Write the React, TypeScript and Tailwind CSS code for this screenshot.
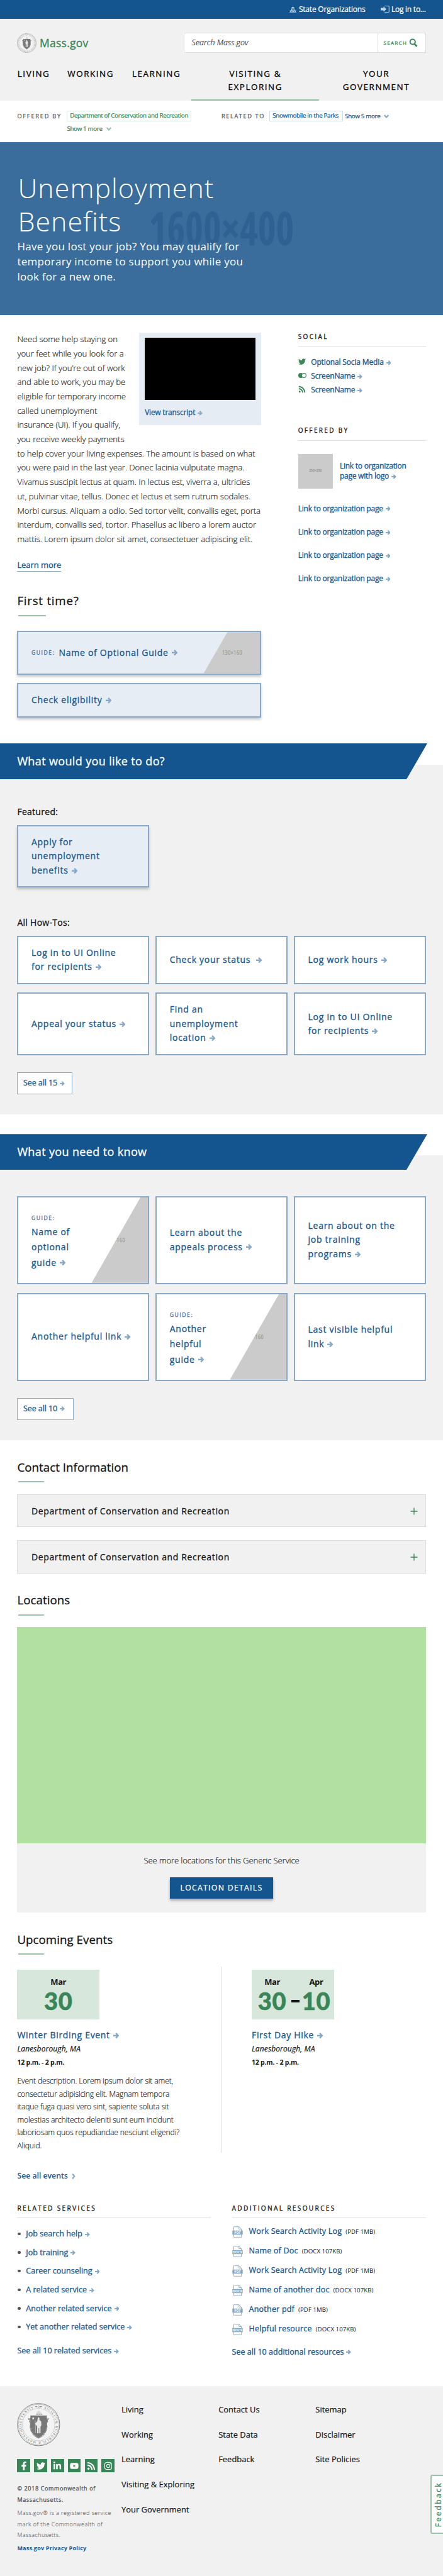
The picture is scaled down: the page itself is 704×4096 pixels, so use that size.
import React from "react";
import { FaFacebookF, FaTwitter, FaLinkedinIn, FaYoutube, FaRss, FaInstagram } from "react-icons/fa";

// Stroke weights that sit between the installed Open Sans cuts
const medium = "font-normal [-webkit-text-stroke:0.3px]";
const book = "font-light [-webkit-text-stroke:0.14px]";
const small = "ml-[4px] size-[7.8px]";

function Arrow({ className = "ml-[5px] size-[9.5px]" }: { className?: string }) {
  return (
    <svg viewBox="0 0 20 20" className={`inline-block align-[-0.3px] ${className}`} fill="none" stroke="#86a8c7" strokeWidth="5">
      <path d="M0 10H16" />
      <path d="M8.5 2l8.2 8-8.2 8" />
    </svg>
  );
}

function Chevron({ color }: { color: string }) {
  return (
    <svg viewBox="0 0 16 12" className="ml-[6px] inline-block h-[6px] w-[8px]" fill="none" stroke={color} strokeWidth="4.5">
      <path d="M1.5 2l6.5 7 6.5-7" />
    </svg>
  );
}

function Seal({ className, id }: { className: string; id: string }) {
  return (
    <svg viewBox="0 0 100 100" className={className} fill="none">
      <circle cx="50" cy="50" r="49" fill="#f4f4f4" stroke="#757575" strokeWidth="1.3" />
      <circle cx="50" cy="50" r="46.8" stroke="#9a9a9a" strokeWidth="0.8" />
      <circle cx="50" cy="50" r="37.4" stroke="#8a8a8a" strokeWidth="1" strokeDasharray="1 0.8" />
      <path id={id} d="M50 10.5a39.5 39.5 0 0 1 0 79a39.5 39.5 0 0 1 0-79" />
      <text fontSize="7.6" fill="#6f6f6f" fontFamily="Liberation Serif, serif">
        <textPath href={`#${id}`} startOffset="13" textLength="222">SIGILLUM REIPUBLICÆ MASSACHUSETTENSIS</textPath>
      </text>
      <path d="M41 8.5l5-1.5v3zM59 8.5l-5-1.5v3z" fill="#777" />
      <circle cx="50" cy="8.5" r="1.8" stroke="#777" />
      <path d="M43 27l6-10 4 2 7 8z" fill="#d9d9d9" />
      <path d="M45 26.5h3M50 26.5h3M55 26.5h3" stroke="#888" strokeWidth="1.4" />
      <path d="M26 37h5l-1.5 5 2.5 6-1 8c2 12 8 20 19 24.5c11-4.5 17-12.5 19-24.5l-1-8 2.5-6L69 37h5" stroke="#777" strokeWidth="3" strokeDasharray="2.4 0.7" />
      <path d="M31 28.7h38v22c0 13-8 24-19 29.3c-11-5.3-19-16.3-19-29.3z" fill="#777" />
      <path d="M37.5 32l.9 2.2 2.4.1-1.900 1.500.7 2.300-2.100-1.300-2 1.300.7-2.300-1.900-1.500 2.400-.1z" fill="#fff" />
      <path d="M42 40c1 10 1 20 .5 30" stroke="#ddd" strokeWidth="0.9" />
      <path d="M48 35.500c0-3 4-3 4 0v4l4 3 .5 9-2 3v15.500h-3V58l-1.500 0v12h-3.500V54l-1.500-2-3-4 5-6z" fill="#e9e9e9" />
    </svg>
  );
}

function Card({ children, featured, className = "" }: { children: React.ReactNode; featured?: boolean; className?: string }) {
  return (
    <div className={`relative flex flex-col justify-center border-2 border-[#88a9c8] px-[20.6px] text-[14px] leading-[22.6px] tracking-[0.052em] whitespace-nowrap text-[#14558f] ${medium} ${featured ? "bg-[#e7edf5] shadow-[0_3px_4px_rgba(0,0,0,0.22)]" : "bg-white"} ${className}`}>
      {children}
    </div>
  );
}

function Thumb({ className }: { className: string }) {
  return (
    <div className={`absolute inset-y-0 right-0 flex w-[89.5px] items-center bg-[#cbcbcb] text-[9px] leading-none tracking-[0.08em] text-[#9c9c9c] ${className}`}>
      <span className="origin-left scale-x-[0.78]">130×160</span>
    </div>
  );
}

function GuideCard({ lines }: { lines: string[] }) {
  return (
    <Card>
      <Thumb className="pl-[21.5px] [clip-path:polygon(87%_0,100%_0,100%_100%,0_100%)]" />
      <div className="h-[23.6px] text-[8.6px] leading-[27.4px] tracking-[0.18em] text-[#3f76a7]">GUIDE:</div>
      <div className="leading-[24.1px]">
        {lines[0]}<br />{lines[1]}<br />{lines[2]}<Arrow />
      </div>
    </Card>
  );
}

function Heading({ children }: { children: React.ReactNode }) {
  return (
    <>
      <h2 className={`text-[18.7px] leading-[24px] tracking-[0.003em] text-[#141414] ${medium}`}>{children}</h2>
      <div className="ml-[1.5px] mt-[10.5px] h-[2px] w-[41px] -skew-x-[20deg] bg-[#9bc2ac]" />
    </>
  );
}

function Band({ children }: { children: React.ReactNode }) {
  return (
    <div className="flex h-[56.9px] w-[679px] items-center bg-[#14558f] pl-[27.4px] text-[18px] tracking-[0.02em] text-white [clip-path:polygon(0_0,100%_0,646px_100%,0_100%)]">
      <h2 className={medium}>{children}</h2>
    </div>
  );
}

function SideHeading({ children }: { children: React.ReactNode }) {
  return <h3 className={`border-b-[1.4px] border-[#dcdcdc] pb-[9px] text-[10px] leading-[14px] tracking-[0.235em] text-[#141414] ${medium}`}>{children}</h3>;
}

function FileIcon({ type }: { type: string }) {
  return (
    <svg viewBox="0 0 17 18" className="mr-[10px] h-[18px] w-[17px] shrink-0 [-webkit-text-stroke:0]" fill="none">
      <path d="M2.500.7h8.300l3.800 3.700v12.900H2.500zM10.800.7v3.700h3.800" stroke="#86a8c7" strokeWidth="0.9" />
      <rect x="0.300" y="6.700" width="16.400" height="6.600" rx="0.600" fill="#86a8c7" />
      <text x="8.500" y="11.900" fontSize="5.200" fontWeight="700" fill="#fff" textAnchor="middle" fontFamily="Open Sans, sans-serif">{type}</text>
    </svg>
  );
}

function Cell({ w, children, active }: { w: string; children: React.ReactNode; active?: boolean }) {
  return (
    <div className={`relative ${w}`}>
      {children}
      {active && <div className="absolute bottom-0 left-px right-px h-[2.1px] -skew-x-[20deg] bg-[#93bda5]" />}
    </div>
  );
}

function DateCol({ month, day, w }: { month: string; day: string; w: string }) {
  return (
    <div className={`flex flex-col items-center ${w}`}>
      <div className="text-[13px] font-bold leading-[16px] tracking-[-0.03em] text-[#141414]">{month}</div>
      <div className="mt-[2.4px] font-['Lato',sans-serif] text-[38px] font-black leading-[38px] tracking-[0.02em] text-[#388557] [-webkit-text-stroke:0.6px]">{day}</div>
    </div>
  );
}

function EventInfo({ title }: { title: string }) {
  return (
    <>
      <div className={`mt-[15.5px] text-[14px] leading-[20px] tracking-[0.049em] text-[#14558f] ${medium}`}>{title}<Arrow /></div>
      <div className="mt-[3.1px] text-[12px] italic leading-[18px] tracking-[0.01em] [-webkit-text-stroke:0.2px]">Lanesborough, MA</div>
      <div className="mt-[3.9px] text-[10.5px] font-bold leading-[16px] tracking-[-0.02em]">12 p.m. - 2 p.m.</div>
    </>
  );
}

const services = ["Job search help", "Job training", "Career counseling", "A related service", "Another related service", "Yet another related service"];
const resources: [string, string, string][] = [
  ["Work Search Activity Log", "PDF", "(PDF 1MB)"],
  ["Name of Doc", "DOCX", "(DOCX 107KB)"],
  ["Work Search Activity Log", "PDF", "(PDF 1MB)"],
  ["Name of another doc", "DOCX", "(DOCX 107KB)"],
  ["Another pdf", "PDF", "(PDF 1MB)"],
  ["Helpful resource", "DOCX", "(DOCX 107KB)"],
];
const footerCols = [
  ["Living", "Working", "Learning", "Visiting & Exploring", "Your Government"],
  ["Contact Us", "State Data", "Feedback"],
  ["Sitemap", "Disclaimer", "Site Policies"],
];
const socials = [FaFacebookF, FaTwitter, FaLinkedinIn, FaYoutube, FaRss, FaInstagram];

export default function App() {
  return (
    <div className="relative h-[4096px] w-[704px] overflow-hidden bg-white font-['Open_Sans','Noto_Sans',sans-serif] whitespace-nowrap text-[#141414]">
      {/* Utility bar */}
      <div className="flex h-[29.6px] items-center justify-end bg-[#14558f] pr-[27.4px] text-[12px] text-white [-webkit-text-stroke:0.2px]">
        <svg viewBox="0 0 22 22" className="mr-[4px] size-[11px]" fill="#c4d4e3">
          <path d="M10.500 0h1v3h-1zM6 9c0-7 10-7 10 0zM5 10h12v1.500H5zM6 12h2v3H6zM10 12h2v3h-2zM14 12h2v3h-2zM1 15h20v1.500H1zM2 17h3v3H2zM7 17h3v3H7zM12 17h3v3h-3zM17 17h3v3h-3zM0 20.500h22V22H0z" />
        </svg>
        <span className="mr-[24.5px] tracking-[-0.017em]">State Organizations</span>
        <svg viewBox="0 0 28 22" className="mr-[3px] h-[11px] w-[14px]">
          <path d="M0 7h9V2.500L18 11l-9 8.500V15H0z" fill="#c4d4e3" />
          <path d="M12 1.200h14.500v19.600H12" fill="none" stroke="#c4d4e3" strokeWidth="2" />
        </svg>
        <span className="tracking-[-0.02em]">Log in to...</span>
      </div>

      {/* Header */}
      <header className="h-[130.6px] bg-[#f1f1f1] pt-[22.7px]">
        <div className="flex h-[31.6px] items-center px-[27.4px]">
          <Seal id="seal-top" className="size-[31px]" />
          <span className={`ml-[4.5px] text-[17.5px] tracking-[0.016em] text-[#388557] ${medium}`}>Mass.gov</span>
          <div className="ml-auto flex h-full w-[385px] items-stretch border-[1.4px] border-[#dcdcdc] bg-white">
            <div className={`flex flex-1 items-center pl-[12px] text-[12.4px] italic tracking-[0.006em] ${book}`}>Search Mass.gov</div>
            <div className={`flex w-[76px] items-center border-l-[1.4px] border-[#dcdcdc] pl-[9px] text-[8px] tracking-[0.161em] text-[#388557] ${medium}`}>
              SEARCH
              <svg viewBox="0 0 28 28" className="ml-[3px] size-[14px]" fill="none" stroke="#388557">
                <circle cx="11.5" cy="11" r="8.2" strokeWidth="4" />
                <path d="M17 17.5l8 8" strokeWidth="5" />
              </svg>
            </div>
          </div>
        </div>
        <nav className={`mt-[23.3px] flex h-[53px] pl-[27.8px] text-[13.4px] leading-[21.2px] tracking-[0.116em] text-black ${medium}`}>
          <Cell w="w-[79.5px]">LIVING</Cell>
          <Cell w="w-[102.7px]">WORKING</Cell>
          <Cell w="w-[93.5px]">LEARNING</Cell>
          <Cell w="w-[204.5px] text-center" active>VISITING &amp;<br />EXPLORING</Cell>
          <Cell w="w-[180px] text-center">YOUR<br />GOVERNMENT</Cell>
        </nav>
      </header>

      {/* Relationships */}
      <div className="flex h-[66px] pl-[27.4px] pt-[15.8px] text-[9.8px] tracking-[-0.035em] [-webkit-text-stroke:0.25px]">
        <div className="flex w-[324.6px]">
          <div className="w-[79px] text-[9.2px] leading-[17px] tracking-[0.195em] text-[#535353]">OFFERED BY</div>
          <div className="text-[#388557]">
            <div className="flex h-[17px] w-[198px] items-center border-[1.4px] border-[#d7e7dc] pl-[3.8px]">Department of Conservation and Recreation</div>
            <div className="mt-[3px] leading-[17px]">Show 1 more<Chevron color="#9bc2ac" /></div>
          </div>
        </div>
        <div className="w-[76.5px] text-[9.2px] leading-[17px] tracking-[0.175em] text-[#535353]">RELATED TO</div>
        <div className="flex text-[#14558f]">
          <div className="flex h-[17px] w-[116.2px] items-center border-[1.4px] border-[#d0dde9] pl-[3.8px]">Snowmobile in the Parks</div>
          <div className="ml-[3.5px] leading-[17px]">Show 5 more<Chevron color="#86a8c7" /></div>
        </div>
      </div>

      {/* Hero */}
      <div className="relative h-[275px] bg-[#3a6d9c] px-[27.4px] pt-[47px] text-white">
        <div className="absolute left-0 top-[99px] w-full scale-x-[0.84] text-center text-[73px] font-bold leading-[73px] text-[#2f6293] [font-stretch:75%]">1600×400</div>
        <h1 className="relative pl-[1px] text-[43px] font-light leading-[52.9px] tracking-[0.024em]">Unemployment<br />Benefits</h1>
        <p className="relative mt-[1.2px] text-[17px] leading-[24.06px] tracking-[0.016em]">
          Have you lost your job? You may qualify for<br />temporary income to support you while you<br />look for a new one.
        </p>
      </div>

      {/* Overview */}
      <div className="flex h-[680.8px] px-[27.4px] pt-[27.1px]">
        <div className="w-[387.9px]">
          <div className="float-right mt-[0.5px] h-[147px] w-[194px] bg-[#e6ecf4] px-[9px] pt-[8.7px]">
            <div className="h-[99px] bg-black" />
            <div className={`mt-[10px] text-[11.7px] leading-[19px] tracking-[-0.008em] text-[#14558f] ${medium}`}>View transcript<Arrow className={small} /></div>
          </div>
          <p className={`text-[13.2px] leading-[22.68px] tracking-[-0.004em] ${book}`}>
            Need some help staying on<br />your feet while you look for a<br />new job? If you’re out of work<br />and able to work, you may be<br />eligible for temporary income<br />called unemployment<br />insurance (UI). If you qualify,<br />you receive weekly payments<br />to help cover your living expenses. The amount is based on what<br />you were paid in the last year. Donec lacinia vulputate magna.<br />Vivamus suscipit lectus at quam. In lectus est, viverra a, ultricies<br />ut, pulvinar vitae, tellus. Donec et lectus et sem rutrum sodales.<br />Morbi cursus. Aliquam a odio. Sed tortor velit, convallis eget, porta<br />interdum, convallis sed, tortor. Phasellus ac libero a lorem auctor<br />mattis. Lorem ipsum dolor sit amet, consectetuer adipiscing elit.
          </p>
          <div className="mt-[21.9px] flex">
            <a className={`border-b border-[#86a8c7] pb-[0.5px] text-[13px] leading-[17px] tracking-[-0.005em] text-[#14558f] ${medium}`}>Learn more</a>
          </div>
          <div className="mt-[34px]">
            <h2 className={`text-[18.7px] leading-[24px] tracking-[0.041em] ${medium}`}>First time?</h2>
            <div className="ml-[1.5px] mt-[10.8px] h-[2px] w-[44px] -skew-x-[20deg] bg-[#9bc2ac]" />
          </div>
          <Card featured className="mt-[23.5px] h-[69.3px]">
            <Thumb className="pl-[29px] [clip-path:polygon(42%_0,100%_0,100%_100%,0_100%)]" />
            <div className="flex items-center">
              <span className="w-[43.5px] text-[8.6px] leading-[22.6px] tracking-[0.18em] text-[#3f76a7]">GUIDE:</span>
              <span>Name of Optional Guide<Arrow /></span>
            </div>
          </Card>
          <Card featured className="mt-[13.7px] h-[54.5px]">
            <span>Check eligibility<Arrow /></span>
          </Card>
        </div>
        <aside className={`ml-[58.5px] w-[202.9px] text-[12px] text-[#14558f] ${medium}`}>
          <div className="mt-[-0.5px]"><SideHeading>SOCIAL</SideHeading></div>
          <div className="mt-[13.5px] leading-[21.9px] tracking-[-0.012em]">
            <div className="flex items-center"><FaTwitter className="mb-[3px] mr-[8.5px] size-[12px] text-[#388557]" /><span>Optional Socia Media<Arrow className={small} /></span></div>
            <div className="flex items-center">
              <svg viewBox="0 0 26 16" className="mb-[3px] mr-[7.5px] h-[8px] w-[13px]">
                <circle cx="8" cy="8" r="8" fill="#388557" />
                <circle cx="18" cy="8" r="6.8" fill="#fff" stroke="#388557" strokeWidth="2.2" />
              </svg>
              <span>ScreenName<Arrow className={small} /></span>
            </div>
            <div className="flex items-center"><FaRss className="mb-[3px] mr-[8.5px] size-[12px] text-[#388557]" /><span>ScreenName<Arrow className={small} /></span></div>
          </div>
          <div className="mt-[45.5px]"><SideHeading>OFFERED BY</SideHeading></div>
          <div className="mt-[21.3px] flex h-[54.7px] items-center">
            <div className="flex size-[55px] items-center justify-center bg-[#cbcbcb] text-[5px] text-[#9c9c9c]">250×250</div>
            <div className="ml-[11.2px] leading-[16.5px] tracking-[-0.02em]">Link to organization<br />page with logo<Arrow className={small} /></div>
          </div>
          <div className="mt-[13.5px] leading-[37.1px] tracking-[-0.02em]">
            {[0, 1, 2, 3].map((i) => <div key={i}>Link to organization page<Arrow className={small} /></div>)}
          </div>
        </aside>
      </div>

      {/* Tasks */}
      <section className="h-[590.3px] bg-[linear-gradient(to_bottom,#fff_34px,#f1f1f1_34px)]">
        <Band>What would you like to do?</Band>
        <div className="px-[27.4px] pt-[41.1px]">
          <h3 className={`text-[14px] leading-[22.6px] tracking-[0.02em] ${medium}`}>Featured:</h3>
          <Card featured className="mt-[9.3px] h-[99.6px] w-[209.7px]"><span>Apply for<br />unemployment<br />benefits<Arrow /></span></Card>
          <h3 className={`mt-[44.5px] text-[14px] leading-[22.6px] tracking-[0.02em] ${medium}`}>All How-Tos:</h3>
          <div className="mt-[9.2px] grid grid-cols-3 grid-rows-[76.9px_99.7px] gap-x-[10.1px] gap-y-[13.7px]">
            <Card><span>Log in to UI Online<br />for recipients<Arrow /></span></Card>
            <Card><span>Check your status<Arrow className="ml-[9px] size-[9.5px]" /></span></Card>
            <Card><span>Log work hours<Arrow /></span></Card>
            <Card><span>Appeal your status<Arrow /></span></Card>
            <Card><span>Find an<br />unemployment<br />location<Arrow /></span></Card>
            <Card><span>Log in to UI Online<br />for recipients<Arrow /></span></Card>
          </div>
          <div className={`mt-[27px] flex h-[35.3px] w-[88px] items-center border border-[#88a9c8] bg-white pl-[8.5px] text-[12.5px] tracking-[-0.005em] text-[#14558f] ${medium}`}><span>See all 15<Arrow className={small} /></span></div>
        </div>
      </section>

      {/* Further reading */}
      <section className="mt-[30.9px] h-[487px] bg-[linear-gradient(to_bottom,#fff_34px,#f1f1f1_34px)]">
        <Band>What you need to know</Band>
        <div className="px-[27.4px] pt-[41.5px]">
          <div className="grid grid-cols-3 grid-rows-[140.2px_140.2px] gap-x-[10.1px] gap-y-[13.9px]">
            <GuideCard lines={["Name of", "optional", "guide"]} />
            <Card><span>Learn about the<br />appeals process<Arrow /></span></Card>
            <Card><span>Learn about on the<br />job training<br />programs<Arrow /></span></Card>
            <Card><span>Another helpful link<Arrow /></span></Card>
            <GuideCard lines={["Another", "helpful", "guide"]} />
            <Card><span>Last visible helpful<br />link<Arrow /></span></Card>
          </div>
          <div className={`mt-[26.7px] flex h-[35.3px] w-[89.5px] items-center border border-[#88a9c8] bg-white pl-[8.5px] text-[12.5px] tracking-[-0.005em] text-[#14558f] ${medium}`}><span>See all 10<Arrow className={small} /></span></div>
        </div>
      </section>

      {/* Contacts, map, events, links */}
      <main className="h-[1503.4px] px-[27.4px] pt-[30.8px]">
        <Heading>Contact Information</Heading>
        {["mt-[18.5px]", "mt-[20.6px]"].map((m) => (
          <div key={m} className={`flex h-[52.5px] items-center justify-between border-[1.4px] border-[#dcdcdc] bg-[#f1f1f1] pl-[21.5px] pr-[11.5px] text-[14px] tracking-[0.046em] ${medium} ${m}`}>
            Department of Conservation and Recreation
            <svg viewBox="0 0 12 12" className="mt-[1.5px] size-[12px]" stroke="#388557" strokeWidth="1.3"><path d="M6 .5v11M.5 6h11" /></svg>
          </div>
        ))}
        <div className="mt-[30.7px]"><Heading>Locations</Heading></div>
        <div className="mt-[18px] h-[343.8px] bg-[#b2dfa2]" />
        <div className="flex h-[110.7px] flex-col items-center bg-[#f1f1f1] pt-[17.2px]">
          <div className={`text-[13.2px] leading-[20px] tracking-[-0.011em] ${book}`}>See more locations for this Generic Service</div>
          <div className="mt-[17.1px] flex h-[34.4px] w-[164.3px] items-center justify-center bg-[#14558f] text-[12.3px] tracking-[0.104em] text-white shadow-[0_3px_4px_rgba(0,0,0,0.3)] [-webkit-text-stroke:0.25px]">LOCATION DETAILS</div>
        </div>
        <div className="mt-[30.7px]"><Heading>Upcoming Events</Heading></div>
        <div className="mt-[18.5px] flex h-[296.3px]">
          <div className="w-[324.5px] border-r border-[#dcdcdc] pt-[5.5px]">
            <div className="flex h-[78.4px] w-[130.6px] justify-center bg-[#d7e7dc] pt-[10.7px]"><DateCol month="Mar" day="30" w="w-[48px]" /></div>
            <EventInfo title="Winter Birding Event" />
            <p className={`mt-[11.8px] text-[12.2px] leading-[20.6px] tracking-[-0.013em] ${book}`}>
              Event description. Lorem ipsum dolor sit amet,<br />consectetur adipisicing elit. Magnam tempora<br />itaque fuga quasi vero sint, sapiente soluta sit<br />molestias architecto deleniti sunt eum incidunt<br />laboriosam quos repudiandae nesciunt eligendi?<br />Aliquid.
            </p>
          </div>
          <div className="pl-[48.1px] pt-[5.5px]">
            <div className="flex h-[78.4px] w-[130.6px] bg-[#d7e7dc] pl-[8.6px] pt-[10.7px]">
              <DateCol month="Mar" day="30" w="w-[48px]" />
              <div className="mx-[6px] mt-[36.8px] h-[4.2px] w-[13.4px] bg-[#141414]" />
              <DateCol month="Apr" day="10" w="w-[41px]" />
            </div>
            <EventInfo title="First Day Hike" />
          </div>
        </div>
        <div className="mt-[27px] text-[12.3px] font-semibold leading-[20px] tracking-[-0.002em] text-[#14558f]">
          See all events
          <svg viewBox="0 0 12 18" className="ml-[6px] inline-block h-[9px] w-[6px]" fill="none" stroke="#86a8c7" strokeWidth="4.5"><path d="M2 1.5l6.5 7.5L2 16.5" /></svg>
        </div>
        <div className={`mt-[33.5px] flex justify-between text-[12.5px] tracking-[0.002em] text-[#14558f] ${medium}`}>
          <div className="w-[308px]">
            <h3 className="border-b-[1.4px] border-[#dcdcdc] pb-[8px] text-[10.2px] leading-[14px] tracking-[0.224em] text-[#141414]">RELATED SERVICES</h3>
            <ul className="mt-[10.6px] leading-[29.56px]">
              {services.map((s) => (
                <li key={s} className="flex items-center"><span className="ml-[1px] mr-[8.5px] size-[4.4px] rounded-full bg-[#535353]" /><span>{s}<Arrow className={small} /></span></li>
              ))}
            </ul>
            <div className="mt-[13.7px] leading-[20px]">See all 10 related services<Arrow className={small} /></div>
          </div>
          <div className="w-[308px]">
            <h3 className="border-b-[1.4px] border-[#dcdcdc] pb-[8px] text-[10.2px] leading-[14px] tracking-[0.224em] text-[#141414]">ADDITIONAL RESOURCES</h3>
            <ul className="mt-[6.7px] leading-[30.94px] tracking-[0.017em]">
              {resources.map(([n, t, s], i) => (
                <li key={i} className="flex h-[30.94px] items-center"><FileIcon type={t} /><span>{n}</span><span className="ml-[6px] pt-[1px] text-[9.7px] tracking-[0.004em] text-[#141414] [-webkit-text-stroke:0]">{s}</span></li>
              ))}
            </ul>
            <div className="mt-[10.5px] leading-[20px]">See all 10 additional resources<Arrow className={small} /></div>
          </div>
        </div>
      </main>

      {/* Footer */}
      <footer className="flex h-[302.4px] bg-[#f1f1f1] pl-[27.4px]">
        <div className="w-[165.6px] pt-[27.4px] text-[9px]">
          <Seal id="seal-footer" className="size-[68.6px]" />
          <div className="mt-[20.9px] flex gap-[6.22px]">
            {socials.map((Icon, i) => (
              <span key={i} className="flex size-[20.6px] items-center justify-center bg-[#388557] text-white"><Icon className="size-[14px]" /></span>
            ))}
          </div>
          <p className={`mt-[16.9px] leading-[18px] tracking-[0.072em] text-[#535353] ${medium}`}>© 2018 Commonwealth of<br />Massachusetts.</p>
          <p className={`mt-[2.9px] leading-[17.8px] tracking-[0.052em] text-[#707070] ${book}`}>Mass.gov® is a registered service<br />mark of the Commonwealth of<br />Massachusetts.</p>
          <p className="mt-[2.8px] font-bold leading-[18px] tracking-[0.023em] text-[#14558f]">Mass.gov Privacy Policy</p>
        </div>
        {footerCols.map((col, i) => (
          <ul key={i} className="w-[154.2px] pt-[18.4px] text-[12.9px] leading-[39.75px] tracking-[0.002em] [-webkit-text-stroke:0.2px]">
            {col.map((l) => <li key={l}>{l}</li>)}
          </ul>
        ))}
      </footer>

      {/* Feedback tab */}
      <div className="absolute right-0 top-[3934.6px] flex h-[94.8px] w-[20.3px] items-center justify-end rounded-l-[3px] border-2 border-r-0 border-[#9bc2ac] bg-white">
        <span className="rotate-180 text-[12px] leading-[14px] tracking-[0.2em] text-[#388557] [writing-mode:vertical-rl] [-webkit-text-stroke:0.25px]">Feedback</span>
      </div>
    </div>
  );
}
